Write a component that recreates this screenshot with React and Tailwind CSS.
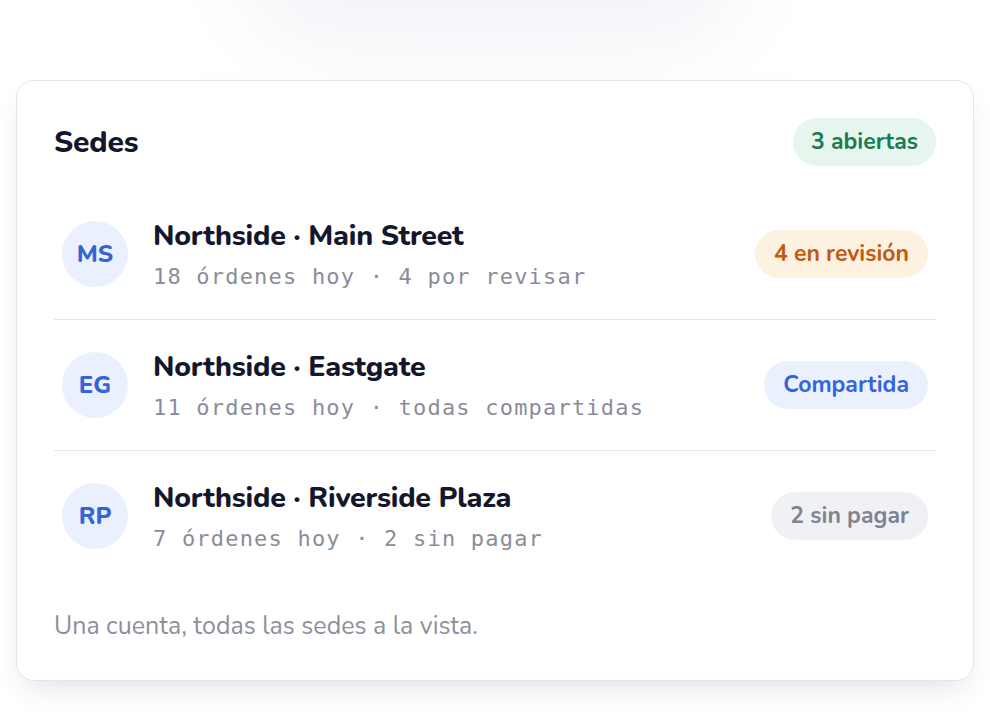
const sedes = [
  { code: 'MS', name: 'Northside · Main Street', meta: '18 órdenes hoy · 4 por revisar', badge: '4 en revisión', tone: 'orange' },
  { code: 'EG', name: 'Northside · Eastgate', meta: '11 órdenes hoy · todas compartidas', badge: 'Compartida', tone: 'blue' },
  { code: 'RP', name: 'Northside · Riverside Plaza', meta: '7 órdenes hoy · 2 sin pagar', badge: '2 sin pagar', tone: 'gray' },
];

const toneClass = {
  orange: 'bg-[#fdf1e2] text-[#c25a10]',
  blue: 'bg-[#eaf0fd] text-[#3563d8]',
  gray: 'bg-[#f0f1f5] text-[#7f8391]',
};

export default function App() {
  return (
    <div className="relative w-[990px] h-[722px] overflow-hidden bg-white font-['Nunito','Lato','Noto_Sans',sans-serif]">
      <div className="absolute left-[240px] top-[-150px] w-[510px] h-[200px] rounded-full bg-[#eef0f5] blur-[40px] opacity-70" />

      <div className="relative pt-[80px] pl-[16px] w-[974px]">
        <div className="rounded-[18px] border border-[#e3e5f1] bg-white px-[37px] pt-[37px] pb-[38px] shadow-[0_14px_30px_-10px_rgba(40,50,90,0.16)]">
          {/* Header */}
          <div className="flex items-center justify-between h-[48px]">
            <h2 className="text-[30px] font-extrabold text-[#14172b] tracking-[-0.2px]">Sedes</h2>
            <span className="h-[48px] flex items-center px-[18px] rounded-full bg-[#e6f6ee] text-[#1b7a52] text-[23px] font-bold">
              3 abiertas
            </span>
          </div>

          {/* Rows */}
          <div className="mt-[23px]">
            {sedes.map((s, i) => (
              <div key={s.code} className={`flex items-center gap-[25px] px-[8px] py-[29px] ${i < sedes.length - 1 ? 'border-b border-[#e6e7ec]' : ''}`}>
                <div className="w-[66px] h-[66px] shrink-0 rounded-full bg-[#eaf0fd] flex items-center justify-center text-[#3563d8] text-[24px] font-extrabold">
                  {s.code}
                </div>
                <div className="flex-1 min-w-0">
                  <p className="text-[28.5px] leading-[36px] font-extrabold text-[#14172b] tracking-[-0.2px]">{s.name}</p>
                  <p className="mt-[10px] text-[22px] leading-[26px] tracking-[1.2px] text-[#8a8d99] font-['DejaVu_Sans_Mono','Liberation_Mono',monospace]">
                    {s.meta}
                  </p>
                </div>
                <span className={`h-[48px] flex items-center px-[19px] rounded-full text-[23px] font-bold ${toneClass[s.tone]}`}>
                  {s.badge}
                </span>
              </div>
            ))}
          </div>

          {/* Footer */}
          <p className="mt-[29px] text-[25px] leading-[32px] text-[#8d909c]">Una cuenta, todas las sedes a la vista.</p>
        </div>
      </div>
    </div>
  );
}
